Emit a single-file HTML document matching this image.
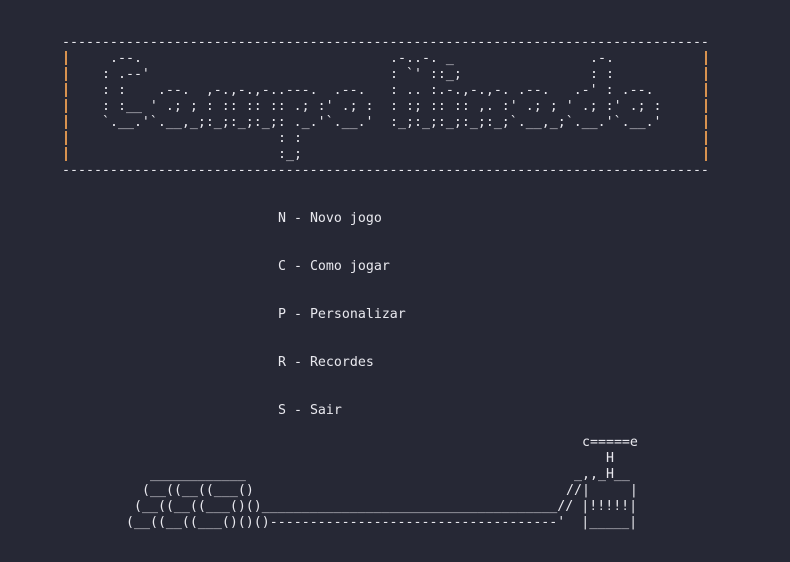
<!DOCTYPE html>
<html><head><meta charset="utf-8"><style>
html,body{margin:0;padding:0;background:#262835;width:790px;height:562px;overflow:hidden}
#t{position:absolute;left:62px;top:35px;font-family:"DejaVu Sans Mono","Liberation Mono",monospace;font-size:13.28px;line-height:16px;color:#e8e8ee}
#t span{position:absolute;white-space:pre;height:16px}
.bar{position:absolute;width:2px;top:51px;height:112px;background:repeating-linear-gradient(to bottom,#d8924f 0,#d8924f 14px,transparent 14px,transparent 16px)}
</style></head><body>
<div class="bar" style="left:65px"></div>
<div class="bar" style="left:705px"></div>
<div id="t">
<span style="left:0;top:0">---------------------------------------------------------------------------------</span>

<span style="left:48px;top:16px">.--.</span>
<span style="left:328px;top:16px">.-..-. _</span>
<span style="left:528px;top:16px">.-.</span>

<span style="left:40px;top:32px">: .--'</span>
<span style="left:328px;top:32px">: `' ::_;</span>
<span style="left:528px;top:32px">: :</span>

<span style="left:40px;top:48px">: :    .--.  ,-.,-.,-..---.  .--.</span>
<span style="left:328px;top:48px">: .. :.-.,-.,-. .--.   .-' : .--.</span>

<span style="left:40px;top:64px">: :__ ' .; ; : :: :: :: .; :' .; :</span>
<span style="left:328px;top:64px">: :; :: :: ,. :' .; ; ' .; :' .; :</span>

<span style="left:40px;top:80px">`.__.'`.__,_;:_;:_;:_;: ._.'`.__.'</span>
<span style="left:328px;top:80px">:_;:_;:_;:_;:_;`.__,_;`.__.'`.__.'</span>

<span style="left:216px;top:96px">: :</span>
<span style="left:216px;top:112px">:_;</span>

<span style="left:0;top:128px">---------------------------------------------------------------------------------</span>

<span style="left:216px;top:176px">N - Novo jogo</span>
<span style="left:216px;top:224px">C - Como jogar</span>
<span style="left:216px;top:272px">P - Personalizar</span>
<span style="left:216px;top:320px">R - Recordes</span>
<span style="left:216px;top:368px">S - Sair</span>

<span style="left:520px;top:400px">c=====e</span>
<span style="left:544px;top:416px">H</span>
<span style="left:88px;top:432px">____________</span>
<span style="left:512px;top:432px">_,,_H__</span>
<span style="left:80px;top:448px">(__((__((___()</span>
<span style="left:504px;top:448px">//|     |</span>
<span style="left:72px;top:464px">(__((__((___()()_____________________________________// |!!!!!|</span>
<span style="left:64px;top:480px">(__((__((___()()()------------------------------------'  |_____|</span>
</div></body></html>
